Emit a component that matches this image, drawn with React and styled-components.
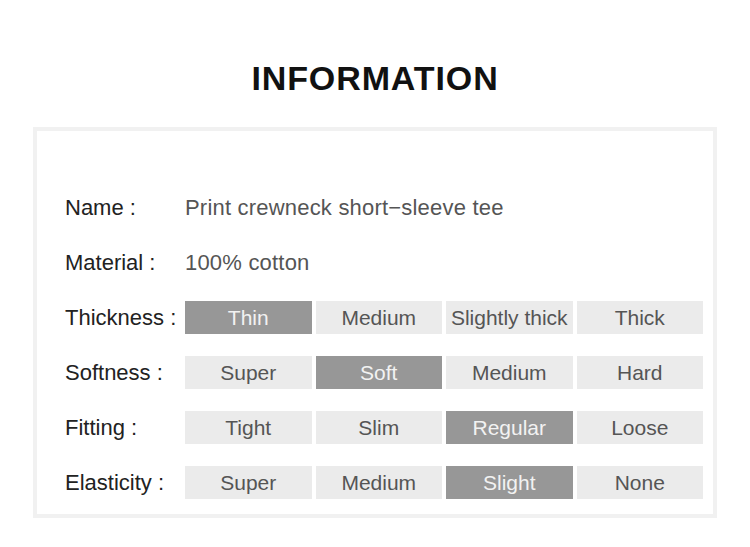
import React from 'react'
import styled, { createGlobalStyle } from 'styled-components'

const GlobalStyle = createGlobalStyle`
  html, body {
    margin: 0;
    padding: 0;
    background: #ffffff;
    font-family: "Liberation Sans", Arial, sans-serif;
  }
`

const info = [
  { label: 'Name', value: 'Print crewneck short\u2212sleeve tee' },
  { label: 'Material', value: '100% cotton' },
  { label: 'Thickness', options: ['Thin', 'Medium', 'Slightly thick', 'Thick'], active: 0 },
  { label: 'Softness', options: ['Super', 'Soft', 'Medium', 'Hard'], active: 1 },
  { label: 'Fitting', options: ['Tight', 'Slim', 'Regular', 'Loose'], active: 2 },
  { label: 'Elasticity', options: ['Super', 'Medium', 'Slight', 'None'], active: 2 },
]

function App() {
  return (
    <Page>
      <GlobalStyle />
      <Title>INFORMATION</Title>
      <Panel>
        {info.map((row) => (
          <Row key={row.label}>
            <Label>{row.label} :</Label>
            {row.options ? (
              <Options>
                {row.options.map((opt, i) => (
                  <Chip key={opt} active={i === row.active}>{opt}</Chip>
                ))}
              </Options>
            ) : (
              <Value>{row.value}</Value>
            )}
          </Row>
        ))}
      </Panel>
    </Page>
  )
}

const Page = styled.div`
  width: 750px;
  height: 547px;
  display: flex;
  flex-direction: column;
  align-items: center;
  padding-top: 58px;
  box-sizing: border-box;
`

const Title = styled.h1`
  margin: 0 0 29px;
  font-size: 34px;
  line-height: 40px;
  font-weight: 700;
  color: #111;
  letter-spacing: 0.9px;
`

const Panel = styled.div`
  width: 684px;
  box-sizing: border-box;
  border: 4px solid #f1f1f1;
  padding: 60px 10px 15px 28px;
  display: flex;
  flex-direction: column;
  gap: 22px;
`

const Row = styled.div`
  display: grid;
  grid-template-columns: 120px 1fr;
  align-items: center;
  height: 33px;
`

const Label = styled.span`
  font-size: 22px;
  color: #222;
  white-space: nowrap;
`

const Value = styled.span`
  font-size: 22px;
  color: #555;
  white-space: nowrap;
  letter-spacing: 0.2px;
`

const Options = styled.div`
  display: grid;
  grid-template-columns: repeat(4, 1fr);
  gap: 4px;
  height: 33px;
`

const Chip = styled.div`
  display: flex;
  align-items: center;
  justify-content: center;
  background: ${({ active }) => (active ? '#979797' : '#ebebeb')};
  color: ${({ active }) => (active ? '#f2f2f2' : '#555')};
  font-size: 21px;
  white-space: nowrap;
`

export default App
